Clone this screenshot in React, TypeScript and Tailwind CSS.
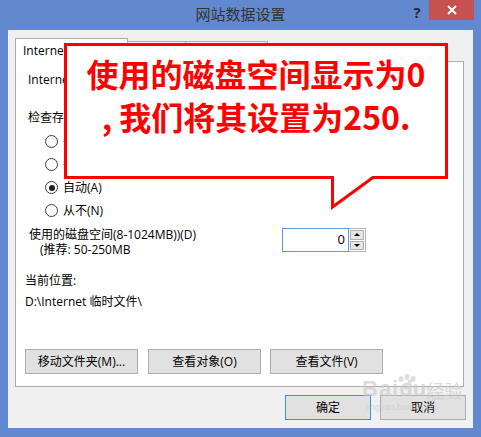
import React from "react";

const FONT = { fontFamily: '"Open Sans", "Noto Sans CJK SC", sans-serif' };

function Radio({ label, checked }: { label: string; checked?: boolean }) {
  return (
    <div className="h-[23px] flex items-center ml-[20px]">
      <div className="w-[13px] h-[13px] rounded-full border border-[#3a3a3a] bg-white flex items-center justify-center">
        {checked && <div className="w-[6px] h-[6px] rounded-full bg-[#222]" />}
      </div>
      <span className="ml-[5px] text-[12px] leading-4 text-black whitespace-nowrap">{label}</span>
    </div>
  );
}

function Btn({ label, className }: { label: string; className?: string }) {
  return (
    <div
      className={
        "h-[25px] w-[113px] bg-[#e1e1e1] border border-[#adadad] flex items-center justify-center text-[12px] text-black " +
        (className || "")
      }
    >
      {label}
    </div>
  );
}

export default function App() {
  return (
    <div className="w-[481px] h-[437px] bg-[#6289d0] flex flex-col relative overflow-hidden" style={FONT}>
      {/* Title bar */}
      <div className="h-[30px] flex">
        <div className="w-[76px]" />
        <div className="flex-1 flex items-center justify-center text-[15px] text-[#333] pb-[1px]" style={{ fontFamily: '"Noto Sans CJK SC", sans-serif' }}>
          网站数据设置
        </div>
        <div className="w-[76px] flex items-start">
          <div className="w-[24px] h-[24px] flex items-center justify-center text-[15px] font-bold text-[#2a2a2a]">?</div>
          <div className="w-[45px] h-[20px] bg-[#c75050] flex items-center justify-center">
            <svg width="10" height="10" viewBox="0 0 10 10">
              <path d="M1 1 L9 9 M9 1 L1 9" stroke="white" strokeWidth="2" />
            </svg>
          </div>
        </div>
      </div>

      {/* Client area */}
      <div className="mx-[8px] h-[398px] bg-[#f0f0f0] flex flex-col pl-[7px] pt-[8px]">
        {/* Tabs */}
        <div className="flex items-end h-[23px]">
          <div className="w-[113px] h-[24px] -mb-px relative z-10 bg-white border border-b-0 border-[#acacac] flex items-center pl-[7px] text-[12px] text-black whitespace-nowrap overflow-hidden">
            Internet 临时文件
          </div>
          <div className="w-[58px] h-[20px] border border-b-0 border-l-0 border-[#acacac] flex items-center justify-center text-[12px]">
            历史记录
          </div>
          <div className="w-[82px] h-[20px] border border-b-0 border-l-0 border-[#acacac] flex items-center justify-center text-[12px]">
            缓存和数据库
          </div>
        </div>

        {/* Panel */}
        <div className="w-[449px] h-[326px] border border-[#acacac] bg-white flex flex-col pl-[9px] text-[12px] text-black">
          <div className="mt-[10px] ml-[3px] leading-4">Internet 临时文件</div>
          <div className="mt-[22px] ml-[3px] leading-4">检查存储的页面的较新版本:</div>
          <div className="mt-[4px] flex flex-col">
            <Radio label="每次访问网页时(E)" />
            <Radio label="每次启动 Internet Explorer 时(S)" />
            <Radio label="自动(A)" checked />
            <Radio label="从不(N)" />
          </div>
          <div className="mt-[5px] flex items-start">
            <div className="w-[253px] ml-[4px] leading-[15px]">
              <div>使用的磁盘空间(8-1024MB))(D)</div>
              <div className="ml-[11px]">(推荐: 50-250MB</div>
            </div>
            <div className="mt-[1px] flex h-[24px]">
              <div className="w-[67px] h-[24px] border border-[#569de5] bg-white flex items-center justify-end pr-[3px] text-[13px]">
                0
              </div>
              <div className="w-[17px] h-[24px] border border-l-0 border-[#b4b4b4] bg-white flex flex-col p-[1px] gap-[1px]">
                <div className="flex-1 bg-[#e6e6e6] border border-[#b0b0b0] flex items-center justify-center">
                  <div className="w-0 h-0 border-l-[3px] border-r-[3px] border-b-[3px] border-l-transparent border-r-transparent border-b-black" />
                </div>
                <div className="flex-1 bg-[#e6e6e6] border border-[#b0b0b0] flex items-center justify-center">
                  <div className="w-0 h-0 border-l-[3px] border-r-[3px] border-t-[3px] border-l-transparent border-r-transparent border-t-black" />
                </div>
              </div>
            </div>
          </div>
          <div className="mt-[16px] leading-4">当前位置:</div>
          <div className="mt-[5px] leading-4">D:\Internet 临时文件\</div>
          <div className="mt-[39px] flex">
            <Btn label="移动文件夹(M)..." />
            <Btn label="查看对象(O)" className="ml-[10px]" />
            <Btn label="查看文件(V)" className="ml-[9px]" />
          </div>
        </div>

        {/* OK / Cancel */}
        <div className="mt-[8px] flex justify-end mr-[7px]">
          <div className="h-[25px] w-[86px] bg-[#e1e1e1] border border-[#3d8ee8] flex items-center justify-center text-[12px] text-black">
            确定
          </div>
          <div className="h-[25px] w-[86px] ml-[9px] bg-[#e1e1e1] border border-[#adadad] flex items-center justify-center text-[12px] text-black">
            取消
          </div>
        </div>
      </div>

      {/* Callout overlay */}
      <div className="absolute z-20 left-[64px] top-[43px] w-[384px] h-[136px] border-[3px] border-[#ff0000] bg-white flex flex-col items-center pt-[6px]">
        <div
          className="text-[32px] leading-[43px] font-bold text-[#ff0000] whitespace-nowrap"
          style={{ fontFamily: '"Noto Sans CJK SC", sans-serif' }}
        >
          使用的磁盘空间显示为0
        </div>
        <div
          className="text-[32px] leading-[43px] font-bold text-[#ff0000] whitespace-nowrap"
          style={{ fontFamily: '"Noto Sans CJK SC", sans-serif' }}
        >
          , 我们将其设置为250.
        </div>
      </div>
      <svg className="absolute z-30 left-[328px] top-[170px]" width="50" height="42" viewBox="0 0 50 42">
        <polygon points="5.5,5 5.5,35 46,5" fill="white" />
        <polyline points="4.5,6 4.5,37 45,7.5" fill="none" stroke="#ff0000" strokeWidth="3" strokeLinejoin="miter" />
      </svg>

      {/* Watermark */}
      <div className="absolute z-20 left-[362px] top-[376px] flex flex-col items-start opacity-60 pointer-events-none">
        <div className="flex items-end relative">
          <span className="text-[22px] font-bold leading-[26px] text-[#c8c8c8] tracking-[1px]" style={{ fontFamily: '"Liberation Sans", sans-serif' }}>
            Bai
          </span>
          <span className="text-[22px] font-bold leading-[26px] text-[#c8c8c8]" style={{ fontFamily: '"Liberation Sans", sans-serif' }}>
            du
          </span>
          <span className="text-[18px] leading-[24px] text-[#c8c8c8]" style={{ fontFamily: '"Noto Sans CJK SC", sans-serif' }}>
            经验
          </span>
          <svg className="absolute left-[34px] -top-[2px]" width="22" height="16" viewBox="0 0 22 16">
            <ellipse cx="5" cy="5" rx="2.5" ry="3" fill="#c8c8c8" />
            <ellipse cx="11" cy="3" rx="2.5" ry="3" fill="#c8c8c8" />
            <ellipse cx="17" cy="5" rx="2.5" ry="3" fill="#c8c8c8" />
            <ellipse cx="11" cy="12" rx="5" ry="3.5" fill="#c8c8c8" />
          </svg>
        </div>
        <span className="text-[9px] leading-[10px] text-[#c8c8c8] ml-[4px]" style={{ fontFamily: '"Liberation Sans", sans-serif' }}>
          jingyan.baidu.com
        </span>
      </div>
    </div>
  );
}
